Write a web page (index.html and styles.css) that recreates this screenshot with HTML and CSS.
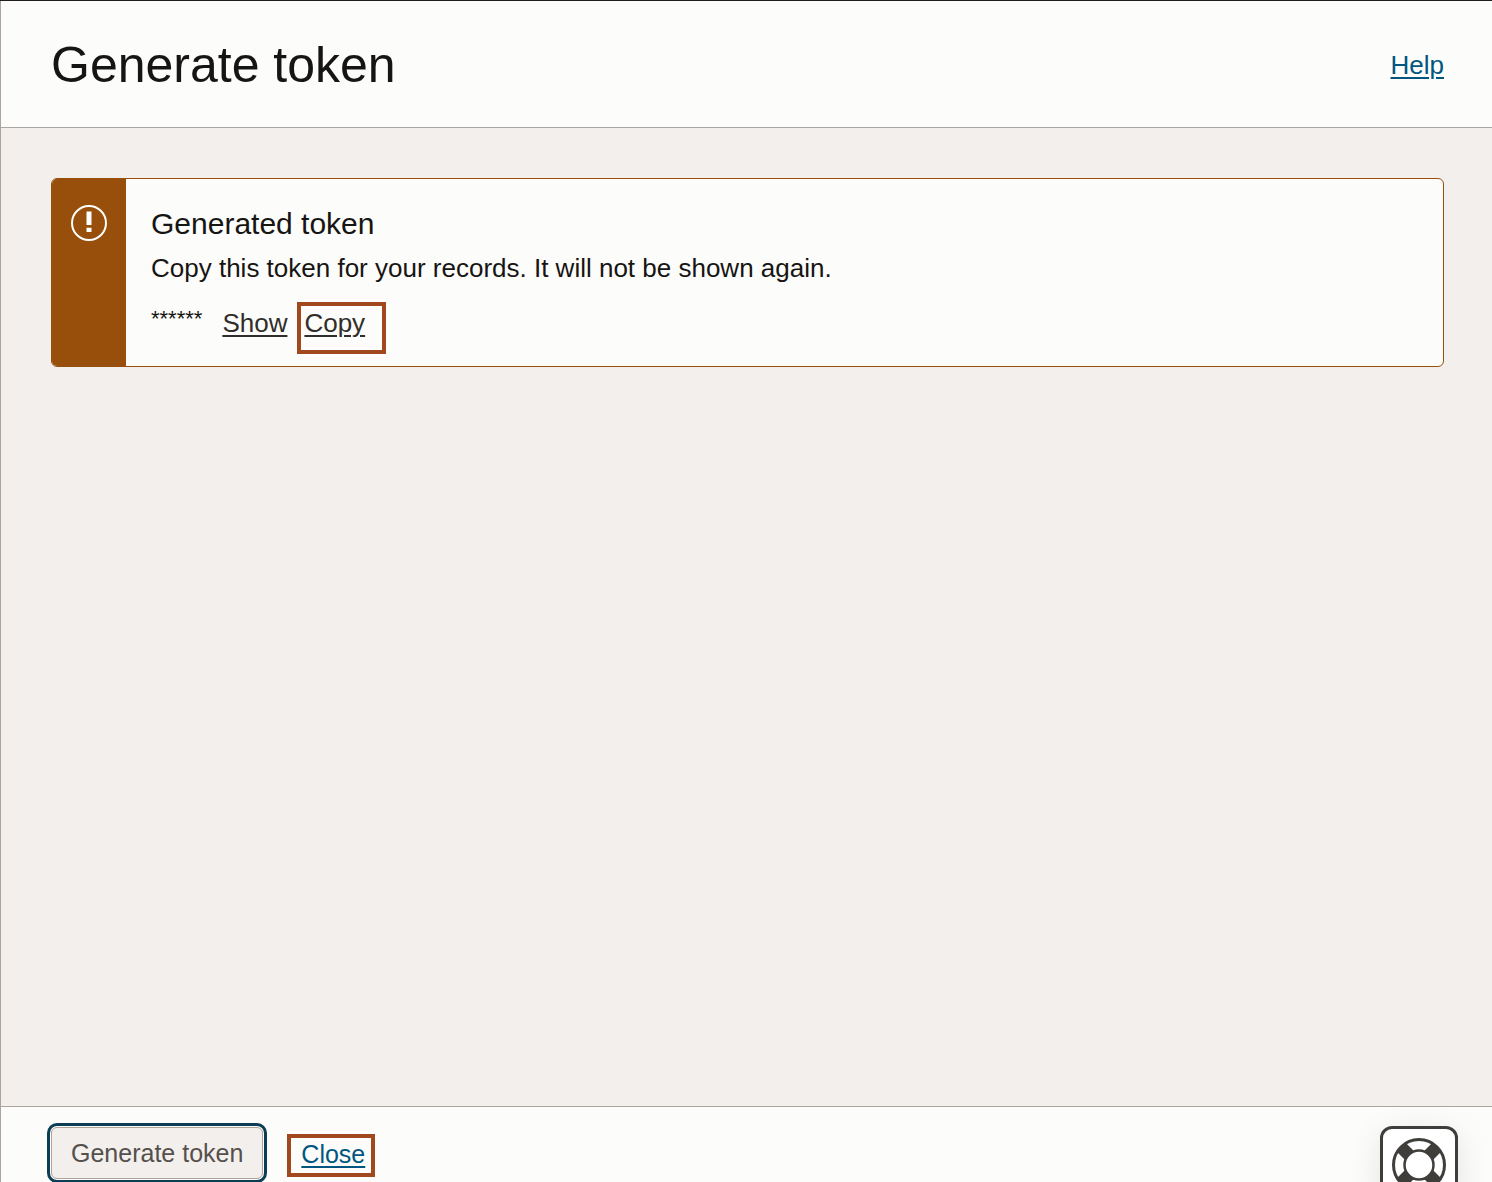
FILE: index.html
```html
<!DOCTYPE html>
<html lang="en">
<head>
<meta charset="utf-8">
<meta name="viewport" content="width=device-width, initial-scale=1">
<title>Generate token</title>
<link rel="stylesheet" href="styles.css">
</head>
<body>
<div class="panel">
  <header class="panel-header">
    <h1 class="panel-title">Generate token</h1>
    <a class="link" href="#help">Help</a>
  </header>

  <main class="panel-body">
    <section class="alert" aria-labelledby="alert-title">
      <div class="alert-side">
        <svg class="alert-icon" viewBox="0 0 36 36" aria-hidden="true">
          <circle cx="18" cy="18" r="17" fill="none" stroke="#fff" stroke-width="2"/>
          <path d="M15.5 6.5h5V20h-5zM15.5 22.7h5V27h-5z" fill="#fff"/>
        </svg>
      </div>
      <div class="alert-content">
        <h2 class="alert-title" id="alert-title">Generated token</h2>
        <p class="alert-text">Copy this token for your records. It will not be shown again.</p>
        <div class="token-row">
          <span class="token-mask">******</span>
          <a class="link link-dark" href="#show">Show</a>
          <span class="marker marker-copy"><a class="link link-dark" href="#copy">Copy</a></span>
        </div>
      </div>
    </section>
  </main>

  <footer class="panel-footer">
    <button class="button" type="button">Generate token</button>
    <span class="marker marker-close"><a class="link" href="#close">Close</a></span>
  </footer>

  <button class="support" type="button" aria-label="Support">
    <svg class="support-icon" viewBox="0 0 54 54" aria-hidden="true">
      <path d="M9.5 9.5L44.500 44.500M44.500 9.500L9.500 44.500" stroke="#403e3b" stroke-width="12.500"/>
      <circle cx="27" cy="27" r="14.500" fill="#fff" stroke="#403e3b" stroke-width="2.500"/>
      <circle cx="27" cy="27" r="25.500" fill="none" stroke="#403e3b" stroke-width="3"/>
    </svg>
  </button>
</div>
</body>
</html>
```
FILE: styles.css
```css
* {
  box-sizing: border-box;
}

body {
  margin: 0;
  background: #f3efec;
  color: #161513;
  font: 26px/36px "Liberation Sans", Arial, Helvetica, sans-serif;
}

.panel {
  display: flex;
  flex-direction: column;
  height: 100vh;
  overflow: hidden;
  border-top: 1px solid #201e1c;
}

.panel-header,
.panel-body,
.panel-footer {
  border-left: 1px solid #aea39d;
}

.panel-header {
  display: flex;
  align-items: center;
  justify-content: space-between;
  padding: 32px 48px 30px 50px;
  border-bottom: 1px solid #aaa6a1;
  background: #fcfcfa;
}

.panel-title {
  margin: 0;
  font-size: 50px;
  font-weight: 400;
  line-height: 64px;
}

.panel-body {
  flex: 1;
  padding: 50px 48px 50px 50px;
}

.link {
  color: #00567f;
  text-decoration: underline;
  text-decoration-thickness: 2px;
  text-underline-offset: 3px;
}

.link-dark {
  color: #312d2a;
}

.alert {
  display: flex;
  overflow: hidden;
  border: 1px solid #984f0c;
  border-radius: 6px;
  background: #fcfcfa;
}

.alert-side {
  flex: none;
  width: 74px;
  padding: 26px 19px;
  background: #984f0c;
}

.alert-icon {
  display: block;
  width: 36px;
  height: 36px;
}

.alert-content {
  flex: 1;
  padding: 27px 25px 12px;
}

.alert-title {
  margin: 0 0 8px;
  font-size: 30px;
  font-weight: 400;
  line-height: 36px;
}

.alert-text {
  margin: 0 0 16px;
}

.token-row {
  display: flex;
  align-items: baseline;
  line-height: 34px;
}

.token-mask {
  align-self: flex-start;
  margin-right: 20px;
  font-size: 22px;
}

.marker {
  border: 4px solid #a2481f;
}

.marker-copy {
  margin-left: 10px;
  padding: 0 17px 10px 3px;
}

.panel-footer {
  display: flex;
  flex: none;
  align-items: flex-start;
  gap: 24px;
  height: 76px;
  padding: 20px 50px 0;
  border-top: 1px solid #aea39d;
  background: #fcfcfa;
  font-size: 25px;
}

.button {
  height: 52px;
  padding: 0 19px;
  border: 1px solid #aea39d;
  border-radius: 6px;
  outline: 3px solid #0b3d54;
  outline-offset: 1px;
  background: #f3efec;
  color: #55504c;
  font: inherit;
}

.marker-close {
  margin-top: 7px;
  padding: 0 6px 3px 10px;
  line-height: 32px;
}

.support {
  position: fixed;
  right: 34px;
  bottom: -22px;
  display: flex;
  align-items: center;
  justify-content: center;
  width: 78px;
  height: 78px;
  padding: 0;
  border: 3px solid #403e3b;
  border-radius: 12px;
  background: #fff;
  box-shadow: 0 8px 32px rgba(0, 0, 0, 0.1);
}

.support-icon {
  width: 54px;
  height: 54px;
}
```
